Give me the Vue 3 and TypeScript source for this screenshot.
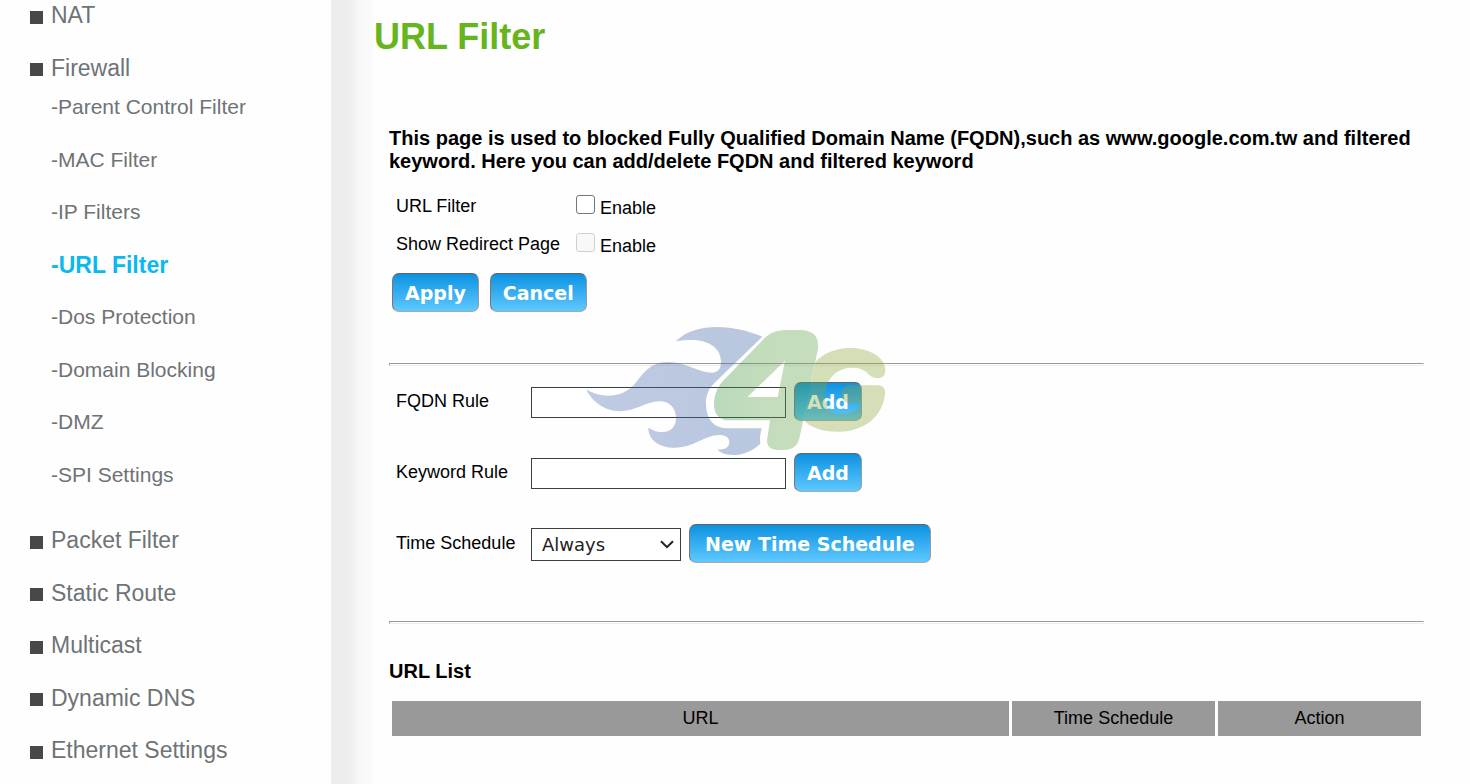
<script setup lang="ts">
import { ref } from 'vue'

interface NavItem {
  label: string
  children?: string[]
}

const nav: NavItem[] = [
  { label: 'NAT' },
  {
    label: 'Firewall',
    children: [
      'Parent Control Filter',
      'MAC Filter',
      'IP Filters',
      'URL Filter',
      'Dos Protection',
      'Domain Blocking',
      'DMZ',
      'SPI Settings',
    ],
  },
  { label: 'Packet Filter' },
  { label: 'Static Route' },
  { label: 'Multicast' },
  { label: 'Dynamic DNS' },
  { label: 'Ethernet Settings' },
]

const current = 'URL Filter'
const columns = ['URL', 'Time Schedule', 'Action']

const filterEnabled = ref(false)
const redirectEnabled = ref(false)
const fqdn = ref('')
const keyword = ref('')
const schedule = ref('Always')

function cancel(): void {
  filterEnabled.value = false
  redirectEnabled.value = false
}
</script>

<template>
  <div class="page">
    <nav class="sidebar">
      <ul class="menu">
        <li v-for="item in nav" :key="item.label">
          <a class="item" href="#"><span class="bullet"></span>{{ item.label }}</a>
          <ul v-if="item.children" class="submenu">
            <li v-for="child in item.children" :key="child">
              <a href="#" class="subitem" :class="{ active: child === current }">-{{ child }}</a>
            </li>
          </ul>
        </li>
      </ul>
    </nav>

    <main class="content">
      <h1>URL Filter</h1>
      <div class="body">
        <p class="intro">
          This page is used to blocked Fully Qualified Domain Name (FQDN),such as www.google.com.tw
          and filtered keyword. Here you can add/delete FQDN and filtered keyword
        </p>

        <form @submit.prevent>
          <div class="option">
            <span class="name">URL Filter</span>
            <label class="check"><input v-model="filterEnabled" type="checkbox" /><span>Enable</span></label>
          </div>
          <div class="option">
            <span class="name">Show Redirect Page</span>
            <label class="check"><input v-model="redirectEnabled" type="checkbox" :disabled="!filterEnabled" /><span>Enable</span></label>
          </div>
          <div class="actions">
            <button type="submit">Apply</button>
            <button type="button" @click="cancel">Cancel</button>
          </div>
        </form>

        <section class="rules">
          <hr />
          <div class="rule">
            <label for="fqdn">FQDN Rule</label>
            <input id="fqdn" v-model="fqdn" type="text" />
            <button type="button">Add</button>
          </div>
          <div class="rule">
            <label for="keyword">Keyword Rule</label>
            <input id="keyword" v-model="keyword" type="text" />
            <button type="button">Add</button>
          </div>
          <div class="rule">
            <label for="schedule">Time Schedule</label>
            <div class="picker">
              <select id="schedule" v-model="schedule">
                <option>Always</option>
              </select>
              <svg class="chevron" viewBox="0 0 14 9" aria-hidden="true">
                <path d="M1 1.2 L7 7.2 L13 1.2" fill="none" stroke="#222" stroke-width="2" />
              </svg>
            </div>
            <button type="button" class="wide">New Time Schedule</button>
          </div>

          <svg class="watermark" viewBox="0 0 990 480" aria-hidden="true">
            <defs>
              <linearGradient id="flame" x1="0" x2="1">
                <stop offset="0" stop-color="#4a6cae" />
                <stop offset="1" stop-color="#3a64a6" />
              </linearGradient>
              <linearGradient id="four" x1="0" x2="1">
                <stop offset="0" stop-color="#3a9546" />
                <stop offset="0.5" stop-color="#5aa044" />
                <stop offset="1" stop-color="#62a342" />
              </linearGradient>
            </defs>
            <g opacity="0.35">
              <path
                fill="url(#flame)"
                d="M317 94 C350 62 395 51 440 51 C490 51 540 64 577 80 L434 218 C412 239 407 262 408 285
                   C410 330 432 355 474 355 L575 355 C570 372 569 387 571 401 C548 422 520 435 490 435
                   C465 435 448 427 442 418 C462 421 478 413 478 397 C478 382 466 375 447 375
                   C405 375 370 413 315 413 C266 413 235 389 235 353 C250 363 264 366 278 366
                   C302 366 318 350 318 325 C318 292 297 274 268 274 C226 276 198 303 149 304
                   C101 304 61 269 49 238 C65 249 88 257 114 257 C150 257 174 245 196 220
                   C220 190 240 156 295 156 C344 156 386 188 426 188 C448 188 454 170 453 154
                   C452 112 414 90 363 90 C345 90 330 92 317 94 Z"
              />
              <path
                fill="url(#four)"
                fill-rule="evenodd"
                d="M584 84 C603 66 624 60 652 60 L690 60 C729 60 748 79 744 116 L689 381
                   C683 409 667 420 640 420 L624 420 C599 420 588 406 592 384 L600 331 L477 331
                   C449 331 432 312 432 284 C432 257 442 230 461 211 Z
                   M533 261 L623 261 L645 152 Z"
              />
              <path
                fill="#87a637"
                d="M736 156 C759 130 798 114 840 114 C899 114 946 142 946 181 C946 196 937 205 924 205
                   C906 205 897 195 890 187 C881 179 867 173 849 173 C796 173 765 211 765 260
                   C765 293 782 311 812 311 C844 311 863 300 873 280 L841 280 C825 280 814 269 814 253
                   C814 237 825 226 842 226 L924 226 C940 226 947 237 945 253 C938 319 884 365 807 365
                   C756 365 717 351 700 329 Z"
              />
            </g>
          </svg>
        </section>

        <hr />
        <h2>URL List</h2>
        <table>
          <thead>
            <tr>
              <th v-for="column in columns" :key="column" scope="col">{{ column }}</th>
            </tr>
          </thead>
        </table>
      </div>
    </main>
  </div>
</template>

<style>
body {
  margin: 0;
  background: #fff;
}
</style>

<style scoped>
.page {
  display: flex;
  min-height: 100vh;
  overflow: hidden;
  background: #fefefe;
  color: #000;
  font-family: Arial, "Liberation Sans", sans-serif;
  font-size: 18px;
}

.sidebar {
  flex: 0 0 374px;
  box-sizing: border-box;
  padding-left: 30px;
  background: linear-gradient(
    to right,
    #fefefe 330px,
    #ececec 332px,
    #eeeeee 350px,
    #f8f8f8 360px,
    #fbfbfb 372px,
    #fefefe 374px
  );
}

.menu,
.submenu {
  margin: 0;
  padding: 0;
  list-style: none;
}

.menu {
  margin-top: -11px;
  font-size: 21px;
  line-height: 2.5em;
}

.item,
.subitem {
  display: block;
  color: #6e7376;
  text-decoration: none;
}

.item {
  display: flex;
  align-items: center;
  gap: 8px;
  font-size: 23px;
}

.bullet {
  width: 13px;
  height: 13px;
  margin-top: 4px;
  background: #484848;
}

.submenu {
  margin: -13px 0 13px 21px;
}

.subitem.active {
  color: #0bb8f0;
  font-size: 23px;
  font-weight: bold;
}

.content {
  flex: 1;
  min-width: 0;
}

h1 {
  margin: 16px 0 0;
  color: #66b51c;
  font-size: 36px;
  line-height: 42px;
}

.body {
  margin: 69px 46px 0 15px;
}

.intro {
  margin: 0 0 14px;
  font-size: 20px;
  font-weight: bold;
  line-height: 23px;
}

.option {
  display: flex;
  align-items: center;
  height: 38px;
  padding-left: 7px;
}

.name {
  width: 180px;
}

.check {
  display: flex;
  align-items: center;
  gap: 5px;
}

.check span {
  padding-top: 4px;
}

.check input {
  appearance: none;
  width: 19px;
  height: 19px;
  margin: 0 0 4px;
  box-sizing: border-box;
  border: 1px solid #767676;
  border-radius: 3px;
  background: #fff;
}

.check input:checked {
  background: #1090e0;
}

.check input:disabled {
  border-color: #d0d0d0;
  background: #f8f8f8;
}

.actions {
  display: flex;
  gap: 11px;
  margin: 10px 0 51px 3px;
}

button {
  box-sizing: border-box;
  height: 39px;
  padding: 0 12px;
  border: 1px solid #888;
  border-color: #5f6468 #9a9a9a #a8a8a8 #777;
  border-radius: 7px;
  background: linear-gradient(#0d92e0, #5fc8ff);
  color: #fff;
  font-family: Verdana, "DejaVu Sans", sans-serif;
  font-size: 19px;
  font-weight: bold;
  white-space: nowrap;
}

.wide {
  padding: 0 15px;
}

hr {
  height: 1px;
  margin: 0;
  border: 1px solid;
  border-color: #9a9a9a #eee #eee #9a9a9a;
}

.rules {
  position: relative;
  padding-bottom: 42px;
}

.rule {
  display: flex;
  align-items: center;
  gap: 8px;
  height: 71px;
  padding-left: 7px;
}

.rule label {
  width: 127px;
}

.rule input,
.rule select {
  box-sizing: border-box;
  margin: 2px 0 0;
  border: 1px solid #3a3f44;
  border-radius: 0;
  background: #fff;
  color: #222;
  font-family: Verdana, "DejaVu Sans", sans-serif;
  font-size: 18px;
}

.rule input {
  width: 255px;
  height: 31px;
  padding: 0 6px;
}

.picker {
  position: relative;
}

.rule select {
  display: block;
  appearance: none;
  width: 150px;
  height: 33px;
  padding: 0 10px;
}

.chevron {
  position: absolute;
  top: 14px;
  right: 7px;
  width: 14px;
  height: 9px;
  pointer-events: none;
}

.watermark {
  position: absolute;
  top: -53px;
  left: 181px;
  width: 330px;
  height: 160px;
  pointer-events: none;
}

h2 {
  margin: 36px 0 15px;
  font-size: 20px;
  line-height: 23px;
}

table {
  width: 100%;
  border-spacing: 3px;
  table-layout: fixed;
}

th {
  width: 203px;
  height: 35px;
  padding: 0;
  background: #999;
  font-weight: normal;
}

th:first-child {
  width: auto;
}
</style>
